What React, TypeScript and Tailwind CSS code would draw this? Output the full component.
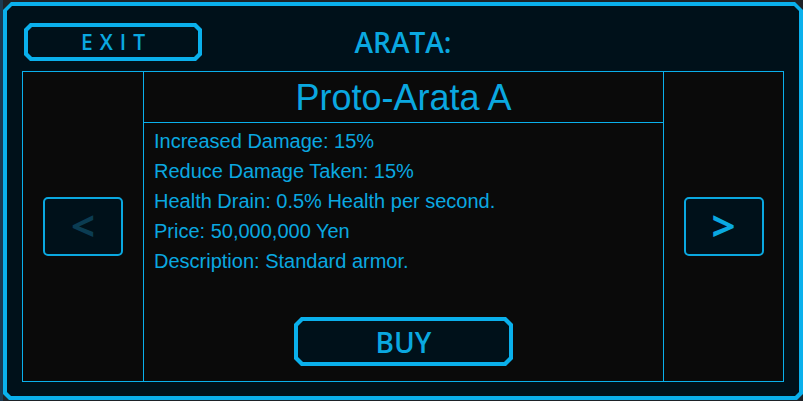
import React from "react";

function App() {
  const lines = [
    "Increased Damage: 15%",
    "Reduce Damage Taken: 15%",
    "Health Drain: 0.5% Health per second.",
    "Price: 50,000,000 Yen",
    "Description: Standard armor.",
  ];
  return (
    <div className="w-[803px] h-[401px] bg-[#1e2227] flex overflow-hidden">
      <div className="w-[3px] h-full bg-[#1b3a52]" />
      <div className="pt-[2px]">
        <div className="w-[800px] h-[398px] bg-[#0ab0ec] p-[4px] [clip-path:polygon(8px_0,calc(100%_-_8px)_0,100%_8px,100%_calc(100%_-_6px),calc(100%_-_6px)_100%,6px_100%,0_calc(100%_-_6px),0_8px)]">
          <div className="w-full h-full bg-[#00111a] px-[15px] flex flex-col [clip-path:polygon(5px_0,calc(100%_-_5px)_0,100%_5px,100%_calc(100%_-_4px),calc(100%_-_4px)_100%,4px_100%,0_calc(100%_-_4px),0_5px)]">
            <div className="h-[65px] pt-[17px] grid grid-cols-[1fr_auto_1fr] items-start">
              <div className="pl-[2px]">
                <div className="w-[178px] h-[38px] bg-[#0ab0ec] p-[4px] [clip-path:polygon(6px_0,calc(100%_-_6px)_0,100%_6px,100%_calc(100%_-_6px),calc(100%_-_6px)_100%,6px_100%,0_calc(100%_-_6px),0_6px)]">
                  <div className="w-full h-full bg-[#00111a] flex items-center justify-center [clip-path:polygon(4px_0,calc(100%_-_4px)_0,100%_4px,100%_calc(100%_-_4px),calc(100%_-_4px)_100%,4px_100%,0_calc(100%_-_4px),0_4px)]">
                    <span className="font-['Open_Sans',sans-serif] font-semibold text-[21px] tracking-[7px] pl-[7px] text-[#0aa8e0] leading-none">
                      EXIT
                    </span>
                  </div>
                </div>
              </div>
              <div className="h-[38px] flex items-center">
                <span className="font-['Open_Sans',sans-serif] font-semibold text-[28px] text-[#0aa8e0] leading-none">
                  ARATA:
                </span>
              </div>
              <div />
            </div>
            <div className="h-[311px] flex flex-col bg-[#0ab0ec] p-px">
              <div className="flex-1 flex gap-px">
                <div className="w-[120px] bg-[#0a0a0a] flex items-center justify-center">
                  <div className="w-[80px] h-[59px] border-2 border-solid border-[#0aa8e0] rounded-[5px] bg-[#00111a] flex items-center justify-center">
                    <span className="font-['Open_Sans',sans-serif] font-bold text-[42px] leading-none text-[#0b3c52] pb-[3px]">
                      &lt;
                    </span>
                  </div>
                </div>
                <div className="w-[519px] flex flex-col gap-px">
                  <div className="h-[50px] bg-[#0a0a0a] flex items-center justify-center">
                    <span className="font-['Liberation_Sans',Arial,sans-serif] text-[36px] leading-none text-[#0aa8e0] pt-[1px]">
                      Proto-Arata A
                    </span>
                  </div>
                  <div className="flex-1 bg-[#0a0a0a] flex flex-col">
                    <div className="pt-[3px] pl-[10px] font-['Liberation_Sans',Arial,sans-serif] text-[20px] leading-[30px] text-[#0aa8e0]">
                      {lines.map((l) => (
                        <div key={l}>{l}</div>
                      ))}
                    </div>
                    <div className="flex-1" />
                    <div className="flex justify-center mb-[15px]">
                      <div className="w-[219px] h-[49px] bg-[#0ab0ec] p-[4px] [clip-path:polygon(7px_0,calc(100%_-_7px)_0,100%_7px,100%_calc(100%_-_7px),calc(100%_-_7px)_100%,7px_100%,0_calc(100%_-_7px),0_7px)]">
                        <div className="w-full h-full bg-[#00111a] flex items-center justify-center [clip-path:polygon(5px_0,calc(100%_-_5px)_0,100%_5px,100%_calc(100%_-_5px),calc(100%_-_5px)_100%,5px_100%,0_calc(100%_-_5px),0_5px)]">
                          <span className="font-['Open_Sans',sans-serif] font-semibold text-[28px] leading-none text-[#0aa8e0]">
                            BUY
                          </span>
                        </div>
                      </div>
                    </div>
                  </div>
                </div>
                <div className="w-[119px] bg-[#0a0a0a] flex items-center justify-center">
                  <div className="w-[80px] h-[59px] border-2 border-solid border-[#0aa8e0] rounded-[5px] bg-[#00111a] flex items-center justify-center">
                    <span className="font-['Open_Sans',sans-serif] font-bold text-[42px] leading-none text-[#0aa8e0] pb-[3px]">
                      &gt;
                    </span>
                  </div>
                </div>
              </div>
            </div>
          </div>
        </div>
      </div>
    </div>
  );
}

export default App;
